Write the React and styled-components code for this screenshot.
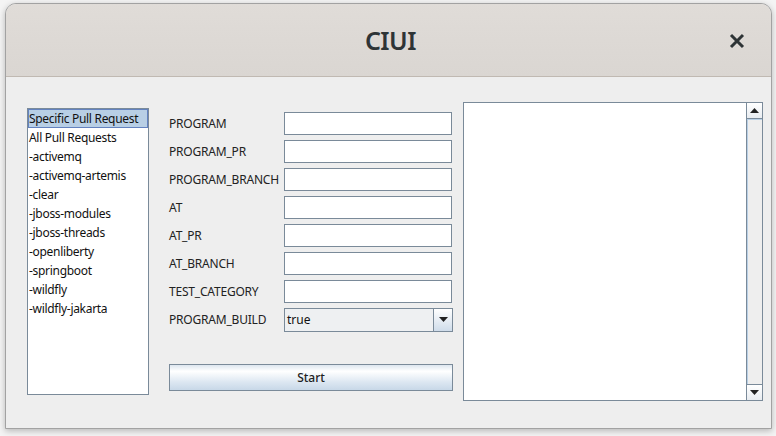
import React from "react";
import styled, { createGlobalStyle } from "styled-components";

const Global = createGlobalStyle`
  html, body { margin: 0; padding: 0; background: #f4f4f4; }
  body { font-family: "Noto Sans", "DejaVu Sans", sans-serif; }
  * { box-sizing: border-box; }
`;

const Page = styled.div`
  width: 776px;
  height: 436px;
  padding: 3px 0 0 5px;
`;

const Window = styled.div`
  width: 767px;
  height: 426px;
  border: 1px solid #a2a2a2;
  border-radius: 11px 11px 0 0;
  background: #eeeeee;
  box-shadow: 0 2px 6px rgba(0, 0, 0, 0.25);
  display: flex;
  flex-direction: column;
  overflow: hidden;
`;

const TitleBar = styled.div`
  height: 73px;
  flex: none;
  background: linear-gradient(#e0dcd8, #dad6d2);
  border-bottom: 1px solid #c0b9b2;
  display: flex;
  align-items: center;
  justify-content: center;
  position: relative;
`;

const Title = styled.div`
  font-family: "Noto Sans", sans-serif;
  font-size: 25px;
  font-weight: 600;
  color: #2e3436;
  letter-spacing: -0.5px;
  margin-left: 4px;
`;

const CloseBtn = styled.div`
  position: absolute;
  right: 25px;
  top: 28px;
  width: 18px;
  height: 18px;
`;

const Body = styled.div`
  flex: 1;
  display: flex;
  align-items: flex-start;
  padding: 24px 0 0 21px;
`;

const List = styled.div`
  width: 122px;
  height: 287px;
  margin-top: 7px;
  background: #fff;
  border: 1px solid #7a8a99;
  padding: 0;
  display: flex;
  flex-direction: column;
`;

const ListItem = styled.div`
  height: 19px;
  line-height: 17px;
  font-size: 12px;
  color: #111;
  padding-left: 0;
  white-space: nowrap;
  letter-spacing: -0.3px;
  border: 1px solid ${(p) => (p.$selected ? "#6382bf" : "transparent")};
  background: ${(p) => (p.$selected ? "#b8cfe5" : "transparent")};
`;

const Form = styled.div`
  width: 284px;
  margin-left: 20px;
  margin-top: 11px;
  display: flex;
  flex-direction: column;
`;

const Row = styled.div`
  display: flex;
  align-items: center;
  height: 23px;
  margin-bottom: 5px;
`;

const Label = styled.div`
  width: 115px;
  font-size: 12px;
  color: #222;
  letter-spacing: -0.2px;
  white-space: nowrap;
`;

const Field = styled.div`
  width: 168px;
  height: 23px;
  background: #fff;
  border: 1px solid #7a8a99;
`;

const Combo = styled.div`
  width: 169px;
  height: 24px;
  border: 1px solid #7a8a99;
  background: #eef0f2;
  display: flex;
`;

const ComboText = styled.div`
  flex: 1;
  font-size: 12px;
  line-height: 22px;
  padding-left: 2px;
  color: #111;
`;

const ComboArrow = styled.div`
  width: 19px;
  border-left: 1px solid #7a8a99;
  background: linear-gradient(#ffffff, #cfdcea);
  display: flex;
  align-items: center;
  justify-content: center;
`;

const StartButton = styled.div`
  margin-top: 28px;
  width: 284px;
  height: 27px;
  border: 1px solid #7a8a99;
  background: linear-gradient(#dde6ef 0%, #ffffff 25%, #dbe6f1 70%, #c8d8e8 100%);
  display: flex;
  align-items: center;
  justify-content: center;
  font-size: 12px;
  font-weight: 500;
  color: #222;
`;

const TextArea = styled.div`
  margin-left: 10px;
  width: 300px;
  height: 299px;
  margin-top: 1px;
  background: #fff;
  border: 1px solid #7a8a99;
  display: flex;
  justify-content: flex-end;
`;

const ScrollBar = styled.div`
  width: 16px;
  border-left: 1px solid #7a8a99;
  background: #eeeeee;
  display: flex;
  flex-direction: column;
`;

const ScrollBtn = styled.div`
  height: 16px;
  flex: none;
  background: linear-gradient(#ffffff, #e8ecf0);
  border-${(p) => (p.$up ? "bottom" : "top")}: 1px solid #7a8a99;
  display: flex;
  align-items: center;
  justify-content: center;
`;

const Thumb = styled.div`
  flex: 1;
  border-left: 1px solid #b8cfe5;
  border-top: 1px solid #b8cfe5;
`;

const Tri = ({ down }) => (
  <svg width="9" height="5" viewBox="0 0 9 5">
    <path d={down ? "M0 0 H9 L4.5 5 Z" : "M0 5 H9 L4.5 0 Z"} fill="#222" />
  </svg>
);

const items = [
  "Specific Pull Request",
  "All Pull Requests",
  "-activemq",
  "-activemq-artemis",
  "-clear",
  "-jboss-modules",
  "-jboss-threads",
  "-openliberty",
  "-springboot",
  "-wildfly",
  "-wildfly-jakarta",
];

const fields = [
  "PROGRAM",
  "PROGRAM_PR",
  "PROGRAM_BRANCH",
  "AT",
  "AT_PR",
  "AT_BRANCH",
  "TEST_CATEGORY",
];

export default function App() {
  return (
    <Page>
      <Global />
      <Window>
        <TitleBar>
          <Title>CIUI</Title>
          <CloseBtn>
            <svg width="18" height="18" viewBox="0 0 18 18">
              <path d="M3 3 L15 15 M15 3 L3 15" stroke="#2e3436" strokeWidth="3" strokeLinecap="butt" />
            </svg>
          </CloseBtn>
        </TitleBar>
        <Body>
          <List>
            {items.map((it, i) => (
              <ListItem key={it} $selected={i === 0}>
                {it}
              </ListItem>
            ))}
          </List>
          <Form>
            {fields.map((f) => (
              <Row key={f}>
                <Label>{f}</Label>
                <Field />
              </Row>
            ))}
            <Row>
              <Label>PROGRAM_BUILD</Label>
              <Combo>
                <ComboText>true</ComboText>
                <ComboArrow>
                  <Tri down />
                </ComboArrow>
              </Combo>
            </Row>
            <StartButton>Start</StartButton>
          </Form>
          <TextArea>
            <ScrollBar>
              <ScrollBtn $up>
                <Tri />
              </ScrollBtn>
              <Thumb />
              <ScrollBtn>
                <Tri down />
              </ScrollBtn>
            </ScrollBar>
          </TextArea>
        </Body>
      </Window>
    </Page>
  );
}
